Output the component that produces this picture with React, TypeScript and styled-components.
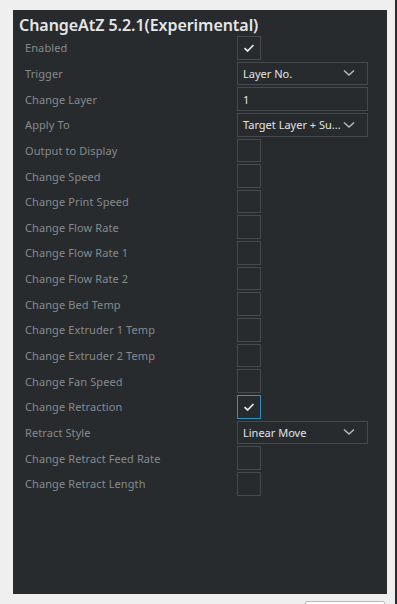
import React from "react";
import styled, { createGlobalStyle } from "styled-components";

type Setting =
  | { label: string; kind: "check"; checked?: boolean; focused?: boolean }
  | { label: string; kind: "select"; value: string }
  | { label: string; kind: "text"; value: string };

const settings: Setting[] = [
  { label: "Enabled", kind: "check", checked: true },
  { label: "Trigger", kind: "select", value: "Layer No." },
  { label: "Change Layer", kind: "text", value: "1" },
  { label: "Apply To", kind: "select", value: "Target Layer + Su..." },
  { label: "Output to Display", kind: "check" },
  { label: "Change Speed", kind: "check" },
  { label: "Change Print Speed", kind: "check" },
  { label: "Change Flow Rate", kind: "check" },
  { label: "Change Flow Rate 1", kind: "check" },
  { label: "Change Flow Rate 2", kind: "check" },
  { label: "Change Bed Temp", kind: "check" },
  { label: "Change Extruder 1 Temp", kind: "check" },
  { label: "Change Extruder 2 Temp", kind: "check" },
  { label: "Change Fan Speed", kind: "check" },
  { label: "Change Retraction", kind: "check", checked: true, focused: true },
  { label: "Retract Style", kind: "select", value: "Linear Move" },
  { label: "Change Retract Feed Rate", kind: "check" },
  { label: "Change Retract Length", kind: "check" },
];

const Check = () => (
  <svg width="12" height="10" viewBox="0 0 12 10">
    <path d="M1.5 5.2 L4.6 8 L10.5 2" fill="none" stroke="#e6e6e6" strokeWidth="1.7" />
  </svg>
);

const Chevron = () => (
  <svg width="12" height="8" viewBox="0 0 12 8">
    <path d="M1 1.5 L6 6 L11 1.5" fill="none" stroke="#b8babc" strokeWidth="1.5" />
  </svg>
);

const App = () => {
  return (
    <Page>
      <GlobalStyle />
      <Panel>
        <Title>ChangeAtZ 5.2.1(Experimental)</Title>
        <Rows>
          {settings.map((s) => (
            <Row key={s.label}>
              <Label>{s.label}</Label>
              {s.kind === "check" && (
                <CheckBox $focused={!!s.focused}>{s.checked && <Check />}</CheckBox>
              )}
              {s.kind === "select" && (
                <Field>
                  <span>{s.value}</span>
                  <Chevron />
                </Field>
              )}
              {s.kind === "text" && (
                <Field>
                  <span>{s.value}</span>
                </Field>
              )}
            </Row>
          ))}
        </Rows>
      </Panel>
      <Footer>
        <CloseButton />
      </Footer>
      <Edge />
    </Page>
  );
};

export default App;

const GlobalStyle = createGlobalStyle`
  html, body {
    margin: 0;
    padding: 0;
    background: #efefef;
    font-family: "Noto Sans", "Open Sans", sans-serif;
  }
`;

const Page = styled.div`
  position: relative;
  width: 397px;
  height: 604px;
  overflow: hidden;
  padding: 10px 0 0 13px;
  box-sizing: border-box;
`;

const Panel = styled.div`
  width: 374px;
  height: 584px;
  background: #272b2e;
  box-sizing: border-box;
  padding: 5px 0 0 6px;
`;

const Title = styled.div`
  color: #e4e6e8;
  font-size: 16px;
  font-weight: 600;
  line-height: 20px;
  letter-spacing: -0.05px;
`;

const Rows = styled.div`
  display: grid;
  grid-auto-rows: 23.65px;
  row-gap: 2px;
  margin-top: 1px;
  padding-left: 6px;
`;

const Row = styled.div`
  display: grid;
  grid-template-columns: 212px 131px;
  align-items: center;
`;

const Label = styled.div`
  color: #868a8d;
  font-size: 11px;
  letter-spacing: 0.1px;
`;

const CheckBox = styled.div<{ $focused: boolean }>`
  width: 24px;
  height: 23.65px;
  box-sizing: border-box;
  border: 1px solid ${(p) => (p.$focused ? "#2b93bd" : "#46494d")};
  display: flex;
  align-items: center;
  justify-content: center;
`;

const Field = styled.div`
  height: 23.65px;
  box-sizing: border-box;
  border: 1px solid #46494d;
  display: flex;
  align-items: center;
  justify-content: space-between;
  padding: 0 12px 0 5px;
  color: #e2e4e6;
  font-size: 11px;
  white-space: nowrap;
`;

const Footer = styled.div`
  display: flex;
  justify-content: flex-end;
  padding: 7px 12px 0 0;
`;

const CloseButton = styled.div`
  width: 78px;
  height: 20px;
  background: #ffffff;
  border: 1px solid #b9b9b9;
  border-radius: 2px;
`;

const Edge = styled.div`
  position: absolute;
  right: 0;
  top: 0;
  bottom: 0;
  width: 2px;
  background: #2a2d30;
`;
